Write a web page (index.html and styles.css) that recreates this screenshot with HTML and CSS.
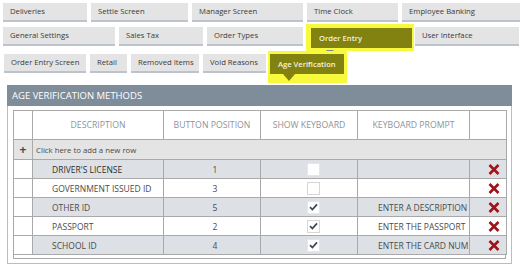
FILE: index.html
```html
<!DOCTYPE html>
<html>
<head>
<meta charset="utf-8">
<link rel="stylesheet" href="styles.css">
</head>
<body>
<div class="nav">
  <div class="row r1">
    <div class="btn w84">Deliveries</div>
    <div class="btn w97">Settle Screen</div>
    <div class="btn w111">Manager Screen</div>
    <div class="btn w91">Time Clock</div>
    <div class="btn w118">Employee Banking</div>
  </div>
  <div class="row r2">
    <div class="btn w112">General Settings</div>
    <div class="btn w84">Sales Tax</div>
    <div class="btn w96">Order Types</div>
    <div class="hl hl-oe"><div class="btn sel w101">Order Entry</div></div>
    <div class="btn w104">User Interface</div>
  </div>
  <div class="row r3">
    <div class="btn w82">Order Entry Screen</div>
    <div class="btn w37">Retail</div>
    <div class="btn w68">Removed Items</div>
    <div class="btn w63">Void Reasons</div>
    <div class="hl hl-av"><div class="btn sel w74 caret">Age Verification</div></div>
  </div>
</div>

<div class="panel">
  <div class="panel-head">AGE VERIFICATION METHODS</div>
  <div class="panel-body">
    <table class="grid">
      <colgroup>
        <col class="c0"><col class="c1"><col class="c2"><col class="c3"><col class="c4"><col class="c5">
      </colgroup>
      <thead>
        <tr class="head">
          <th></th><th>DESCRIPTION</th><th>BUTTON POSITION</th><th>SHOW KEYBOARD</th><th>KEYBOARD PROMPT</th><th></th>
        </tr>
      </thead>
      <tbody>
        <tr class="add">
          <td class="plus">+</td><td colspan="5" class="addtext">Click here to add a new row</td>
        </tr>
        <tr class="alt">
          <td class="first"></td><td class="desc dark">DRIVER'S LICENSE</td><td class="num">1</td>
          <td class="chk"><span class="box"></span></td><td class="prompt"></td>
          <td class="del"><svg width="12" height="11" viewBox="0 0 12 11"><path d="M1.5 1 L10.5 10 M10.5 1 L1.5 10" stroke="#a01319" stroke-width="2.6" fill="none"/></svg></td>
        </tr>
        <tr>
          <td class="first"></td><td class="desc">GOVERNMENT ISSUED ID</td><td class="num">3</td>
          <td class="chk"><span class="box"></span></td><td class="prompt"></td>
          <td class="del"><svg width="12" height="11" viewBox="0 0 12 11"><path d="M1.5 1 L10.5 10 M10.5 1 L1.5 10" stroke="#a01319" stroke-width="2.6" fill="none"/></svg></td>
        </tr>
        <tr class="alt">
          <td class="first"></td><td class="desc">OTHER ID</td><td class="num">5</td>
          <td class="chk"><span class="box"><svg width="9" height="8" viewBox="0 0 9 8"><path d="M1 4.2 L3.4 6.6 L8 1.4" stroke="#3c4754" stroke-width="1.7" fill="none"/></svg></span></td>
          <td class="prompt"><div class="clip">ENTER A DESCRIPTION</div></td>
          <td class="del"><svg width="12" height="11" viewBox="0 0 12 11"><path d="M1.5 1 L10.5 10 M10.5 1 L1.5 10" stroke="#a01319" stroke-width="2.6" fill="none"/></svg></td>
        </tr>
        <tr>
          <td class="first"></td><td class="desc">PASSPORT</td><td class="num">2</td>
          <td class="chk"><span class="box"><svg width="9" height="8" viewBox="0 0 9 8"><path d="M1 4.2 L3.4 6.6 L8 1.4" stroke="#3c4754" stroke-width="1.7" fill="none"/></svg></span></td>
          <td class="prompt"><div class="clip">ENTER THE PASSPORT NUMBER</div></td>
          <td class="del"><svg width="12" height="11" viewBox="0 0 12 11"><path d="M1.5 1 L10.5 10 M10.5 1 L1.5 10" stroke="#a01319" stroke-width="2.6" fill="none"/></svg></td>
        </tr>
        <tr class="alt">
          <td class="first"></td><td class="desc">SCHOOL ID</td><td class="num">4</td>
          <td class="chk"><span class="box"><svg width="9" height="8" viewBox="0 0 9 8"><path d="M1 4.2 L3.4 6.6 L8 1.4" stroke="#3c4754" stroke-width="1.7" fill="none"/></svg></span></td>
          <td class="prompt"><div class="clip">ENTER THE CARD NUMBER</div></td>
          <td class="del"><svg width="12" height="11" viewBox="0 0 12 11"><path d="M1.5 1 L10.5 10 M10.5 1 L1.5 10" stroke="#a01319" stroke-width="2.6" fill="none"/></svg></td>
        </tr>
      </tbody>
    </table>
    <div class="grid-foot"></div>
  </div>
</div>
</body>
</html>
```

FILE: styles.css
```css
* { box-sizing: border-box; }
html, body { margin: 0; padding: 0; background: #ffffff; }
body {
  width: 520px;
  height: 266px;
  overflow: hidden;
  font-family: "Open Sans", "Noto Sans", sans-serif;
  color: #333;
}

.nav { padding-top: 3px; }
.row {
  display: flex;
  align-items: flex-start;
  gap: 4px;
  height: 19px;
}
.r1 { padding-left: 3px; }
.r2 { padding-left: 3px; margin-top: 5px; }
.r3 { padding-left: 4px; margin-top: 8px; }

.btn {
  flex: none;
  height: 19px;
  background: #e4e4e4;
  border-bottom: 2px solid #bcc3cc;
  font-size: 7.7px;
  line-height: 17px;
  padding-left: 7px;
  color: #3a3a3a;
  white-space: nowrap;
  overflow: hidden;
}
.w37 { width: 37px; }
.w63 { width: 63px; }
.w68 { width: 68px; }
.w74 { width: 74px; }
.w82 { width: 82px; }
.w84 { width: 84px; }
.w91 { width: 91px; }
.w96 { width: 96px; }
.w97 { width: 97px; }
.w101 { width: 101px; }
.w104 { width: 104px; }
.w111 { width: 111px; }
.w112 { width: 112px; }
.w118 { width: 118px; }

.hl {
  flex: none;
  position: relative;
  background: #f8f83c;
}
.hl-oe {
  margin: -3px -3px 0 -1px;
  padding: 4px 2px 3px 5px;
}
.hl-oe::after {
  content: "";
  position: absolute;
  left: 20px;
  top: 26px;
  border-left: 4px solid transparent;
  border-right: 4px solid transparent;
  border-top: 4px solid #7e8792;
}
.hl-av {
  margin: -3px 0 0 -2px;
  padding: 3px 3px 9px 2px;
}
.btn.sel {
  background: #828210;
  border-bottom: none;
  height: 20px;
  line-height: 20px;
  color: #f3f3df;
  font-weight: 600;
  font-size: 7.6px;
  padding-left: 8px;
  overflow: visible;
}
.caret { position: relative; }
.caret::after {
  content: "";
  position: absolute;
  left: 13px;
  top: 20px;
  border-left: 6px solid transparent;
  border-right: 6px solid transparent;
  border-top: 7px solid #828210;
}

.panel {
  margin: 12px 0 0 7px;
  width: 505px;
}
.panel-head {
  height: 21px;
  background: #7f8c99;
  color: #ffffff;
  font-size: 9.5px;
  line-height: 21px;
  padding-left: 5px;
}
.panel-body {
  border: 1px solid #b7bec6;
  border-top: none;
  padding: 4px 5px 4px 5px;
}

.grid {
  border-collapse: collapse;
  table-layout: fixed;
  width: 493px;
  font-size: 8.5px;
}
.c0 { width: 19px; }
.c1 { width: 131px; }
.c2 { width: 97px; }
.c3 { width: 97px; }
.c4 { width: 112px; }
.c5 { width: 37px; }

.grid th, .grid td {
  border: 1px solid #a9a9a9;
  padding: 0;
}
.grid th {
  font-weight: 400;
  font-size: 8.7px;
  color: #8c949c;
  text-align: center;
  height: 29px;
}
.grid td { height: 19px; color: #4a4a4a; }
.grid tr.add td {
  height: 20px;
  background: #e4e4e4;
}
.plus {
  text-align: center;
  font-size: 12px;
  font-weight: 700;
  color: #111;
  line-height: 12px;
}
.addtext {
  font-size: 7.8px;
  color: #777;
  padding-left: 3px !important;
}
.grid tr.alt td { background: #dde1e6; }
.grid tr.alt td.first { background: #ffffff; }
.desc { padding-left: 19px !important; white-space: nowrap; overflow: hidden; }
.dark { color: #2e2e2e !important; }
.num { text-align: center; padding-left: 6px !important; }
.chk { text-align: center; padding-left: 9px !important; }
.box {
  display: inline-flex;
  align-items: center;
  justify-content: center;
  width: 13px;
  height: 13px;
  background: #ffffff;
  border: 1px solid #d6d6d6;
  vertical-align: middle;
}
.grid tr.alt .box { border-color: #e4e6e9; }
.prompt { padding-left: 20px !important; }
.clip {
  white-space: nowrap;
  overflow: hidden;
  width: 90px;
}
.del { text-align: center; padding-left: 12px !important; }
.del svg { display: inline-block; vertical-align: middle; }

.grid-foot {
  width: 493px;
  height: 4px;
  border: 1px solid #a9a9a9;
  border-top: none;
}
```
